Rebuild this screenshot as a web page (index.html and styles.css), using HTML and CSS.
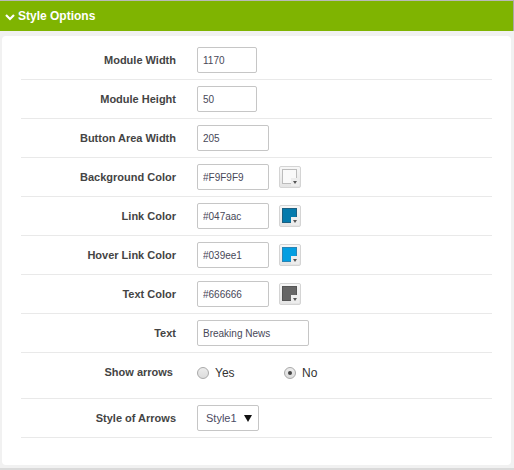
FILE: index.html
```html
<!DOCTYPE html>
<html>
<head>
<meta charset="utf-8">
<link rel="stylesheet" href="styles.css">
</head>
<body>
<div class="page">
  <div class="header">
    <svg class="chev" width="10" height="8" viewBox="0 0 10 8"><path d="M1 2 L5 6 L9 2" fill="none" stroke="#fff" stroke-width="2.2"/></svg>
    <span>Style Options</span>
  </div>
  <div class="panel">
    <div class="row"><span class="lbl">Module Width</span><div class="field"><input class="txt w60" value="1170"></div></div>
    <div class="row"><span class="lbl">Module Height</span><div class="field"><input class="txt w60" value="50"></div></div>
    <div class="row"><span class="lbl">Button Area Width</span><div class="field"><input class="txt w72" value="205"></div></div>
    <div class="row"><span class="lbl">Background Color</span><div class="field"><input class="txt w72" value="#F9F9F9"><span class="swatch"><span class="chip c-bg"></span><span class="notch"></span></span></div></div>
    <div class="row"><span class="lbl">Link Color</span><div class="field"><input class="txt w72" value="#047aac"><span class="swatch"><span class="chip c-link"></span><span class="notch"></span></span></div></div>
    <div class="row"><span class="lbl">Hover Link Color</span><div class="field"><input class="txt w72" value="#039ee1"><span class="swatch"><span class="chip c-hover"></span><span class="notch"></span></span></div></div>
    <div class="row"><span class="lbl">Text Color</span><div class="field"><input class="txt w72" value="#666666"><span class="swatch"><span class="chip c-text"></span><span class="notch"></span></span></div></div>
    <div class="row"><span class="lbl">Text</span><div class="field"><input class="txt w112" value="Breaking News"></div></div>
    <div class="row row-radio"><span class="lbl lbl-radio">Show arrows</span><div class="field">
      <label class="opt"><input type="radio" name="arrows" class="rad"><span>Yes</span></label>
      <label class="opt"><input type="radio" name="arrows" class="rad" checked><span>No</span></label>
    </div></div>
    <div class="row"><span class="lbl">Style of Arrows</span><div class="field">
      <div class="sel"><span>Style1</span><svg width="8" height="7" viewBox="0 0 8 7"><path d="M0 0 H8 L4 7 Z" fill="#111"/></svg></div>
    </div></div>
  </div>
  <div class="bottom-line"></div>
</div>
</body>
</html>
```
FILE: styles.css
```css
html, body {
  margin: 0;
  padding: 0;
  background: #f1f1f1;
}
.page {
  width: 514px;
  font-family: "Liberation Sans", Arial, sans-serif;
}
.header {
  height: 30px;
  background: #7fb401;
  border-top: 1px solid #b9b9b9;
  border-right: 1px solid #a8a8a8;
  display: flex;
  align-items: center;
  gap: 3px;
  padding-left: 5px;
  color: #fff;
  font-weight: bold;
  font-size: 12px;
}
.chev {
  display: block;
  margin-top: 1px;
}
.panel {
  margin: 5px 3px 0 2px;
  background: #fff;
  border-radius: 4px;
  padding: 5px 19px 27px;
}
.row {
  display: grid;
  grid-template-columns: 155px 1fr;
  column-gap: 21px;
  align-items: center;
  height: 38px;
  border-bottom: 1px solid #e9e9e9;
}
.row-radio {
  height: 40px;
  padding-bottom: 5px;
}
.lbl {
  text-align: right;
  font-size: 11px;
  font-weight: bold;
  color: #444;
}
.lbl-radio {
  padding-right: 3px;
  margin-top: -3px;
}
.field {
  display: flex;
  align-items: center;
}
.txt {
  box-sizing: border-box;
  height: 26px;
  border: 1px solid #c6c6c6;
  border-radius: 2px;
  padding: 0 5px;
  font-family: "Liberation Sans", Arial, sans-serif;
  font-size: 10px;
  color: #484858;
  background: #fff;
  margin: 0;
  outline: none;
}
.w60 { width: 60px; }
.w72 { width: 72px; }
.w112 { width: 112px; }
.swatch {
  position: relative;
  box-sizing: border-box;
  width: 22px;
  height: 22px;
  margin-left: 10px;
  border: 1px solid #d4d4d4;
  border-radius: 2px;
  background: linear-gradient(#f7f7f7, #e4e4e4);
}
.chip {
  position: absolute;
  left: 2px;
  top: 2px;
  width: 15px;
  height: 15px;
  box-sizing: border-box;
}
.c-bg { background: #f9f9f9; border: 1px solid #bcbcbc; }
.c-link { background: #047aac; border: 1px solid #1c5f80; }
.c-hover { background: #039ee1; border: 1px solid #2a84b4; }
.c-text { background: #666666; border: 1px solid #555; }
.notch {
  position: absolute;
  right: 1px;
  bottom: 1px;
  width: 8px;
  height: 8px;
  background: #ededed;
}
.notch::after {
  content: "";
  position: absolute;
  left: 2px;
  top: 3px;
  border-left: 2px solid transparent;
  border-right: 2px solid transparent;
  border-top: 3px solid #555;
}
.opt {
  display: flex;
  align-items: center;
  width: 87px;
  font-size: 12px;
  color: #333;
}
.rad {
  -webkit-appearance: none;
  appearance: none;
  box-sizing: border-box;
  width: 12px;
  height: 12px;
  margin: 0 6px 0 0;
  border: 1px solid #a9a9a9;
  border-radius: 50%;
  background: linear-gradient(#ececec, #dcdcdc);
  display: flex;
  align-items: center;
  justify-content: center;
}
.rad:checked::after {
  content: "";
  width: 4px;
  height: 4px;
  border-radius: 50%;
  background: #444;
}
.sel {
  box-sizing: border-box;
  width: 62px;
  height: 26px;
  border: 1px solid #c6c6c6;
  border-radius: 2px;
  padding: 0 6px 0 8px;
  display: flex;
  align-items: center;
  justify-content: space-between;
  font-size: 11px;
  color: #4c4c64;
}
.bottom-line {
  height: 2px;
  margin-top: 3px;
  background: #dadada;
}
```
